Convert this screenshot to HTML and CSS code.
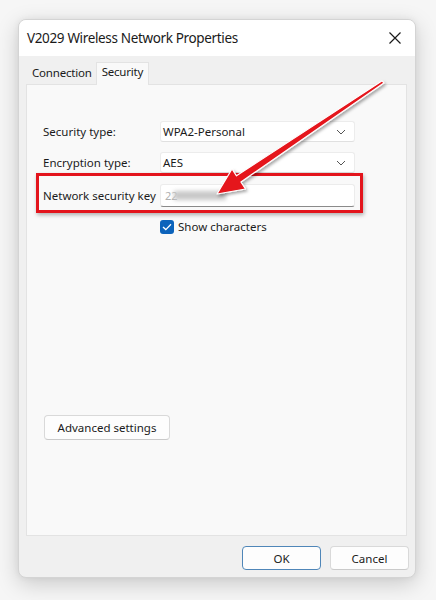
FILE: index.html
```html
<!DOCTYPE html>
<html>
<head>
<meta charset="utf-8">
<link rel="stylesheet" href="styles.css">
</head>
<body>
<div class="window">
  <div class="titlebar">
    <span class="title">V2029 Wireless Network Properties</span>
    <svg class="close" width="14" height="14" viewBox="0 0 14 14"><path d="M1.5 1.5 L12.5 12.5 M12.5 1.5 L1.5 12.5" stroke="#1a1a1a" stroke-width="1.2" fill="none"/></svg>
  </div>
  <div class="body">
    <div class="tabs">
      <div class="tab">Connection</div>
      <div class="tab active">Security</div>
    </div>
    <div class="panel">
      <div class="row">
        <span class="label">Security type:</span>
        <div class="select"><span>WPA2-Personal</span><svg width="10" height="6" viewBox="0 0 10 6"><path d="M1 1 L5 5 L9 1" stroke="#555" stroke-width="1" fill="none"/></svg></div>
      </div>
      <div class="row">
        <span class="label">Encryption type:</span>
        <div class="select"><span>AES</span><svg width="10" height="6" viewBox="0 0 10 6"><path d="M1 1 L5 5 L9 1" stroke="#555" stroke-width="1" fill="none"/></svg></div>
      </div>
      <div class="row keyrow">
        <span class="label">Network security key</span>
        <div class="input"><span class="hint">22</span><span class="blur"></span></div>
        <div class="redbox"></div>
      </div>
      <div class="checkrow">
        <span class="check"><svg width="10" height="8" viewBox="0 0 10 8"><path d="M1 4 L3.8 6.6 L9 1.2" stroke="#fff" stroke-width="1.3" fill="none"/></svg></span>
        <span>Show characters</span>
      </div>
      <div class="spacer"></div>
      <button class="btn adv">Advanced settings</button>
    </div>
    <div class="footer">
      <button class="btn ok">OK</button>
      <button class="btn">Cancel</button>
    </div>
  </div>
</div>
<svg class="arrow" width="436" height="600" viewBox="0 0 436 600">
  <defs>
    <filter id="sh" x="-20%" y="-20%" width="140%" height="140%">
      <feDropShadow dx="1.5" dy="2" stdDeviation="1.5" flood-color="#000" flood-opacity="0.35"/>
    </filter>
  </defs>
  <polygon points="383.8,83 240.9,182 245.5,189 217,194 232,169 236.5,175.8 382.2,80.8" fill="#e5141b" stroke="#fff" stroke-width="1.2" stroke-linejoin="round" filter="url(#sh)"/>
</svg>
</body>
</html>
```
FILE: styles.css
```css
* { box-sizing: border-box; }
html, body { margin: 0; padding: 0; }
body {
  width: 436px;
  height: 600px;
  background: #f6f6f6;
  font-family: "Noto Sans", "Open Sans", sans-serif;
  color: #1b1b1b;
  padding: 19px 0 0 18px;
  overflow: hidden;
  position: relative;
}
.window {
  width: 398px;
  height: 559px;
  border: 1px solid #d4d4d4;
  border-radius: 8px;
  background: #f0f0f0;
  box-shadow: 0 6px 22px rgba(0,0,0,0.18), 0 0 6px rgba(0,0,0,0.06);
  overflow: hidden;
  display: flex;
  flex-direction: column;
}
.titlebar {
  height: 36px;
  background: #ffffff;
  display: flex;
  align-items: center;
  justify-content: space-between;
  padding: 0 13px 0 8px;
}
.title {
  font-size: 13.5px;
  letter-spacing: -0.35px;
  color: #1a1a1a;
}
.close { display: block; }
.body {
  flex: 1;
  display: flex;
  flex-direction: column;
  padding: 6px 8px 0 7px;
}
.tabs {
  display: flex;
  align-items: flex-end;
  height: 22px;
  padding-left: 2px;
}
.tab {
  font-size: 11.5px;
  letter-spacing: -0.2px;
  padding: 0 4px;
  height: 19px;
  line-height: 15px;
  color: #1a1a1a;
}
.tab.active {
  height: 23px;
  line-height: 17px;
  background: #f9f9f9;
  border: 1px solid #e3e3e3;
  border-bottom: none;
  margin-bottom: -1px;
  margin-left: 0;
  padding: 0 5px;
  position: relative;
  z-index: 1;
}
.panel {
  height: 452px;
  background: #f9f9f9;
  border: 1px solid #e3e3e3;
  padding: 36px 0 0 16px;
  display: flex;
  flex-direction: column;
  font-size: 11.5px;
}
.row {
  display: flex;
  align-items: center;
  height: 21px;
  margin-bottom: 10px;
  position: relative;
}
.label { width: 117px; flex: none; white-space: nowrap; }
.select {
  width: 195px;
  height: 21px;
  background: #ffffff;
  border: 1px solid #ececec;
  border-bottom-color: #e0e0e0;
  border-radius: 3px;
  display: flex;
  align-items: center;
  justify-content: space-between;
  padding: 0 8px 0 2px;
}
.keyrow { height: 23px; margin-bottom: 12px; margin-top: 1px; }
.input {
  width: 195px;
  height: 23px;
  background: #ffffff;
  border: 1px solid #ececec;
  border-bottom: 1px solid #8a8a8a;
  border-radius: 3px;
  display: flex;
  align-items: center;
  padding-left: 4px;
  position: relative;
}
.hint { color: #b0b0b0; font-size: 11px; }
.blur {
  width: 52px;
  height: 9px;
  background: #c8c8c8;
  filter: blur(2px);
  margin-left: -4px;
}
.redbox {
  position: absolute;
  left: -7px;
  top: -11px;
  width: 327px;
  height: 40px;
  border: 3px solid #e3141c;
  box-shadow: 1px 2px 4px rgba(0,0,0,0.3);
}
.checkrow {
  display: flex;
  align-items: center;
  padding-left: 117px;
  gap: 4px;
  height: 15px;
}
.check {
  width: 14px;
  height: 14px;
  border-radius: 3px;
  background: #0c63bb;
  display: flex;
  align-items: center;
  justify-content: center;
}
.spacer { height: 181px; flex: none; }
.btn {
  font-family: inherit;
  font-size: 11.5px;
  color: #1b1b1b;
  background: #fdfdfd;
  border: 1px solid #d9d9d9;
  border-bottom-color: #cacaca;
  border-radius: 4px;
  height: 25px;
  padding: 0;
}
.adv { width: 126px; margin-left: 1px; }
.footer {
  display: flex;
  justify-content: flex-end;
  gap: 9px;
  padding-top: 10px;
  margin-right: -2px;
}
.footer .btn { width: 79px; height: 24px; }
.footer .ok { border: 1px solid #4f86b8; }
.arrow {
  position: absolute;
  left: 0;
  top: 0;
  pointer-events: none;
}
```
